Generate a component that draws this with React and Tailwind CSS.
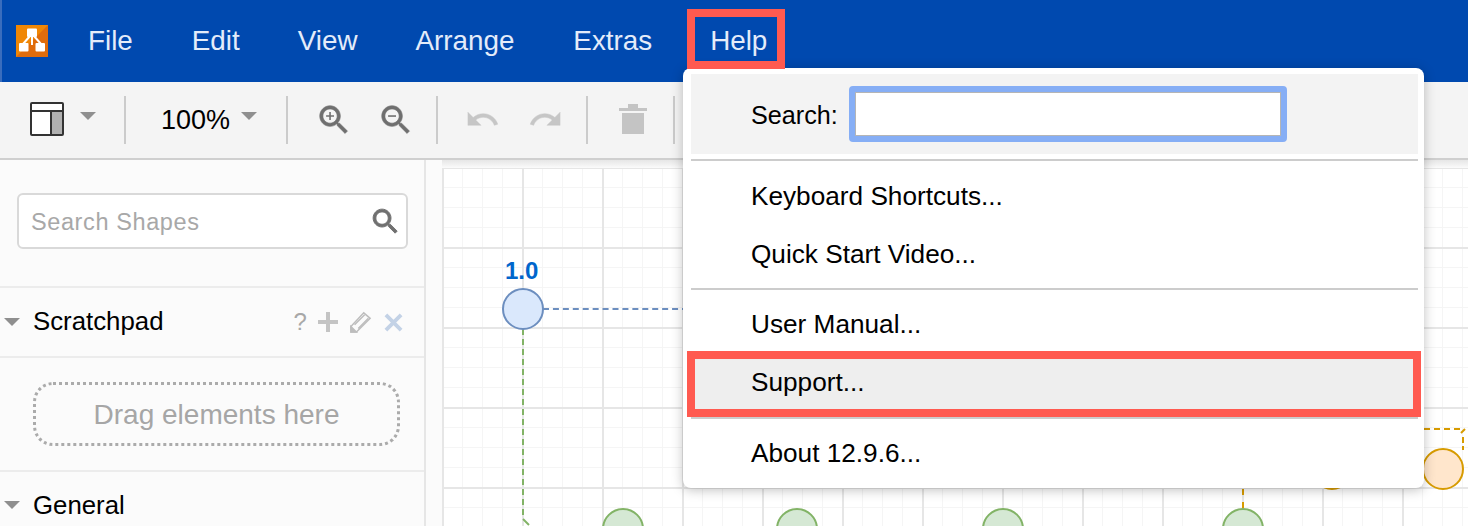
const Caret = ({ className = '' }) => (
  <svg viewBox="0 0 16 8" className={`h-2 w-4 shrink-0 ${className}`}>
    <path d="M0 0h16L8 8z" fill="#8f8f8f" />
  </svg>
)

const Sep = ({ className = '' }) => <div className={`h-12 w-0.5 shrink-0 bg-[#cbcbcb] ${className}`} />

const LENS = 'M15.5 14h-.79l-.28-.27C15.41 12.59 16 11.11 16 9.5 16 5.91 13.09 3 9.5 3S3 5.91 3 9.5 5.91 16 9.5 16c1.61 0 3.09-.59 4.23-1.57l.27.28v.79l5 4.99L20.49 19l-4.99-5zm-6 0C7.01 14 5 11.99 5 9.5S7.01 5 9.5 5 14 7.01 14 9.5 11.99 14 9.5 14z'

const ZoomIcon = ({ inner, className = '' }) => (
  <svg viewBox="0 0 24 24" className={`h-[38px] w-[38px] shrink-0 ${className}`} fill="#6f6f6f">
    <path d={LENS} stroke="#6f6f6f" strokeWidth="0.4" />
    <path d={inner} />
  </svg>
)

const UndoIcon = ({ flip, className = '' }) => (
  <svg viewBox="0 0 24 24" className={`-mt-0.5 h-[35px] w-[35px] shrink-0 ${flip ? '-scale-x-100' : ''} ${className}`}>
    <path
      d="M12.5 8c-2.65 0-5.05.99-6.9 2.6L2 7v9h9l-3.62-3.62c1.39-1.16 3.16-1.88 5.12-1.88 3.54 0 6.55 2.31 7.6 5.5l2.37-.78C21.08 11.03 17.15 8 12.5 8z"
      fill="#c6c6c6"
      stroke="#c6c6c6"
      strokeWidth="0.3"
    />
  </svg>
)

const MenuRow = ({ children, className = '' }) => (
  <div className={`flex h-[58px] items-center pl-[68px] text-[26.2px] text-black ${className}`}>{children}</div>
)

const Divider = () => <div className="ml-2 mr-1.5 h-0.5 bg-[#cccccc]" />

const Circle = ({ className }) => <div className={`absolute h-[42px] w-[42px] rounded-full border-2 ${className}`} />

export default function App() {
  return (
    <div className="relative flex h-[526px] w-[1468px] flex-col overflow-hidden bg-[#fbfbfb] font-['Liberation_Sans',Arial,sans-serif]">
      {/* menubar */}
      <header className="flex h-[82px] shrink-0 items-center border-l-2 border-[#3a6dbd] bg-[#0049af] text-[27.8px] text-[#e4ecfa]">
        <svg viewBox="0 0 32 32" className="ml-3.5 h-8 w-8 shrink-0">
          <rect width="32" height="32" fill="#f08705" />
          <path d="M32 0v32H0z" fill="#df6c0c" />
          <path d="M14 11l-7 8M18 11l7 8M16 11v9" stroke="#fff" strokeWidth="2" fill="none" />
          <rect x="11" y="3.5" width="10" height="8.5" rx="1" fill="#fff" />
          <rect x="3" y="18" width="9.5" height="8.5" rx="1" fill="#fff" />
          <rect x="19.5" y="18" width="9.5" height="8.5" rx="1" fill="#fff" />
        </svg>
        <span className="ml-10">File</span>
        <span className="ml-[59px]">Edit</span>
        <span className="ml-[58px]">View</span>
        <span className="ml-[58px]">Arrange</span>
        <span className="ml-[59px]">Extras</span>
        <span className="ml-[58px]">Help</span>
      </header>

      {/* toolbar */}
      <div className="flex h-[78px] shrink-0 items-center border-b-2 border-[#cfcfcf] bg-[#f4f4f4]">
        <svg viewBox="0 0 34 34" className="-mt-0.5 ml-[30px] h-[34px] w-[34px] shrink-0">
          <rect x="1" y="1" width="32" height="32" rx="1" fill="#fff" stroke="#333" strokeWidth="2" />
          <rect x="21" y="10" width="11" height="22" fill="#b0b0b0" />
          <path d="M1 9h32M21 9v24" stroke="#333" strokeWidth="2" />
        </svg>
        <Caret className="-mt-2 ml-4" />
        <Sep className="ml-[28px]" />
        <span className="ml-[35px] text-[27px] text-black">100%</span>
        <Caret className="-mt-2 ml-[11px]" />
        <Sep className="ml-[29px]" />
        <ZoomIcon className="ml-[27px]" inner="M12 10h-2v2H9v-2H7V9h2V7h1v2h2v1z" />
        <ZoomIcon className="ml-6" inner="M7 9h5v1H7z" />
        <Sep className="ml-[21px]" />
        <UndoIcon className="ml-[27px]" />
        <UndoIcon flip className="ml-7" />
        <Sep className="ml-[23px]" />
        <svg viewBox="0 0 28 30" className="-mt-0.5 ml-[31px] h-[30px] w-7 shrink-0">
          <path d="M0 4h28v3H0zM9 0h10v4H9zM3 9h22v21H3z" fill="#c4c4c4" />
        </svg>
        <Sep className="ml-[26px]" />
      </div>

      <div className="flex min-h-0 flex-1">
        {/* shapes panel */}
        <aside className="w-[426px] shrink-0 border-r-2 border-[#e6e6e6] bg-[#fbfbfb]">
          <div className="h-[126px] pl-[17px] pt-[33px]">
            <div className="flex h-14 w-[391px] items-center justify-between rounded-md border-2 border-[#d9d9d9] bg-white pl-3 pr-1">
              <span className="mt-1 text-[23.5px] tracking-[0.6px] text-[#a8a8a8]">Search Shapes</span>
              <svg viewBox="0 0 24 24" className="h-[33px] w-[33px]" fill="#707070">
                <path d={LENS} stroke="#707070" strokeWidth="0.7" />
              </svg>
            </div>
          </div>
          <div className="flex h-[72px] items-center border-y-2 border-[#ececec] pl-1">
            <Caret />
            <span className="-mt-0.5 ml-[13px] text-[25.8px] text-black">Scratchpad</span>
            <span className="ml-[130px] text-[24px] text-[#a8a8a8]">?</span>
            <svg viewBox="0 0 20 20" className="ml-[11px] h-5 w-5 shrink-0"><path d="M8 0h4v8h8v4h-8v8H8v-8H0V8h8z" fill="#c4c4c4" /></svg>
            <svg viewBox="0 0 24 24" className="ml-3 h-[22px] w-[22px] shrink-0" fill="none" stroke="#bdbdbd" strokeWidth="1.6">
              <path d="M1 17L15 2l7 6L7 23H1z" />
              <path d="M1 17l6 6H1z" fill="#bdbdbd" />
              <path d="M5 15L16 4M9 19L20 8" />
            </svg>
            <svg viewBox="0 0 20 20" className="ml-3 h-[19px] w-[19px] shrink-0"><path d="M2 2l16 16M18 2L2 18" stroke="#c3d2e6" strokeWidth="4" /></svg>
          </div>
          <div className="h-[114px] border-b-2 border-[#ececec] pl-[33px] pt-6">
            <div className="flex h-16 w-[367px] items-center justify-center rounded-[20px] border-[3px] border-dotted border-[#ababab] pt-0.5 text-[28px] text-[#a6a6a6]">
              Drag elements here
            </div>
          </div>
          <div className="flex h-[66px] items-center pl-1">
            <Caret />
            <span className="ml-[13px] text-[25.8px] text-black">General</span>
          </div>
        </aside>

        {/* canvas */}
        <main className="relative min-w-0 flex-1 pl-4">
          <div className="relative h-full bg-white bg-[linear-gradient(#e6e6e6_2px,transparent_2px),linear-gradient(90deg,#e6e6e6_2px,transparent_2px),linear-gradient(#f5f5f5_1px,transparent_1px),linear-gradient(90deg,#f5f5f5_1px,transparent_1px)] bg-[length:80px_80px,80px_80px,20px_20px,20px_20px] bg-[position:0_7px,0_0,0_7px,0_0]">
            <div className="absolute inset-x-0 top-0 h-2 bg-linear-to-b from-[#e6e6e6] to-[#fbfbfb]" />
          </div>
        </main>
      </div>

      {/* diagram, sits on the free canvas */}
      <span className="absolute left-[505px] top-[259px] text-[24px] font-bold leading-none text-[#0066cc]">1.0</span>
      <div className="absolute left-[543px] top-[308px] h-0 w-[145px] border-t-2 border-dashed border-[#6c8ebf]" />
      <div className="absolute left-[522px] top-[329px] h-[186px] w-0 border-l-2 border-dashed border-[#82b366]" />
      <svg className="absolute left-[522px] top-[514px] h-3 w-3" viewBox="0 0 12 12"><path d="M1 5l6 6" stroke="#82b366" strokeWidth="2" /></svg>
      <Circle className="left-[502px] top-[288px] border-[#6c8ebf] bg-[#dae8fc]" />
      <Circle className="left-[602px] top-[508px] border-[#82b366] bg-[#d5e8d4]" />
      <Circle className="left-[776px] top-[508px] border-[#82b366] bg-[#d5e8d4]" />
      <Circle className="left-[982px] top-[508px] border-[#82b366] bg-[#d5e8d4]" />
      <Circle className="left-[1222px] top-[508px] border-[#82b366] bg-[#d5e8d4]" />
      <div className="absolute left-[1242px] top-[489px] h-[19px] w-0 border-l-2 border-dashed border-[#d79b00]" />
      <Circle className="left-[1311px] top-[448px] border-[#d79b00] bg-[#ffe6cc]" />
      <div className="absolute left-[1424px] top-[428px] h-0 w-9 border-t-2 border-dashed border-[#d79b00]" />
      <svg className="absolute left-[1456px] top-[428px] h-6 w-3" viewBox="0 0 12 24" fill="none" stroke="#d79b00" strokeWidth="2">
        <path d="M5 5L9 1M7 9v6M7 18v4" />
      </svg>
      <Circle className="left-[1422px] top-[448px] border-[#d79b00] bg-[#ffe6cc]" />

      {/* help menu */}
      <div className="absolute left-[683px] top-[68px] h-[420px] w-[741px] rounded-lg bg-white pt-1.5 shadow-[0_2px_12px_rgba(0,0,0,0.25)]">
        <div className="ml-2 mr-1.5 flex h-20 items-center bg-[#f3f3f3] pl-[60px] text-[25.2px] text-black">
          <span className="mt-1 w-[98px] shrink-0">Search:</span>
          <div className="h-14 w-[438px] rounded-[4px] border-[6px] border-[#86aef5] bg-white shadow-[inset_0_0_0_1px_#b5b5b5]" />
        </div>
        <div className="h-[5px]" />
        <Divider />
        <MenuRow className="mt-[7px]">Keyboard Shortcuts...</MenuRow>
        <MenuRow>Quick Start Video...</MenuRow>
        <div className="h-1" />
        <Divider />
        <MenuRow className="mt-2.5 !h-[50px]">User Manual...</MenuRow>
        <MenuRow className="ml-1 mr-1 mt-1 bg-[#eeeeee] !pl-16">Support...</MenuRow>
        <div className="h-[5px]" />
        <Divider />
        <MenuRow className="mt-1.5">About 12.9.6...</MenuRow>
      </div>

      {/* callouts */}
      <div className="absolute left-[687px] top-[9px] h-[60px] w-[98px] border-8 border-[#ff5a50]" />
      <div className="absolute left-[687px] top-[351px] h-[66px] w-[734px] border-8 border-[#ff5a50]" />
    </div>
  )
}
